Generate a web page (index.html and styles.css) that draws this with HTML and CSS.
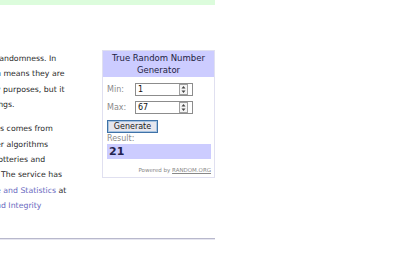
FILE: index.html
```html
<!DOCTYPE html>
<html lang="en">
  <head>
    <meta charset="UTF-8" />
    <meta name="viewport" content="width=device-width, initial-scale=1.0" />
    <title>RANDOM.ORG</title>
    <link rel="stylesheet" href="styles.css">
  </head>
  <body>
    <div class="topbar"></div>

    <div class="main">
      <div class="intro">
        <p class="para">
          <span class="line">randomness. In</span>
          <span class="line">h means they are</span>
          <span class="line">y purposes, but it</span>
          <span class="line">ings.</span>
        </p>
        <p class="para">
          <span class="line">ss comes from</span>
          <span class="line">er algorithms</span>
          <span class="line">lotteries and</span>
          <span class="line">. The service has</span>
          <span class="line"><a href="#">e and Statistics</a> at</span>
          <span class="line"><a href="#">nd Integrity</a></span>
        </p>
      </div>

      <div class="trng">
        <div class="trng-head">True Random Number<br />Generator</div>
        <form class="trng-body">
          <div class="field">
            <label>Min:</label>
            <div class="num">
              <span>1</span>
              <svg class="spin" width="9" height="11" viewBox="0 0 9 11">
                <rect x="0.5" y="0.5" width="8" height="10" fill="#f4f4f4" stroke="#a0a0a0" />
                <path d="M4.5 2 L6.5 4.5 L2.5 4.5 Z M4.5 9 L6.5 6.5 L2.5 6.5 Z" fill="#444" />
              </svg>
            </div>
          </div>
          <div class="field">
            <label>Max:</label>
            <div class="num">
              <span>67</span>
              <svg class="spin" width="9" height="11" viewBox="0 0 9 11">
                <rect x="0.5" y="0.5" width="8" height="10" fill="#f4f4f4" stroke="#a0a0a0" />
                <path d="M4.5 2 L6.5 4.5 L2.5 4.5 Z M4.5 9 L6.5 6.5 L2.5 6.5 Z" fill="#444" />
              </svg>
            </div>
          </div>
          <button type="button" class="gen">Generate</button>
          <div class="res-label">Result:</div>
          <div class="result">21</div>
          <div class="powered">Powered by <a href="#">RANDOM.ORG</a></div>
        </form>
      </div>
    </div>

    <div class="rule"></div>
  </body>
</html>
```

FILE: styles.css
```css
body {
  margin: 0;
  font-family: "DejaVu Sans", Verdana, sans-serif;
  color: #2a2a2a;
  background: white;
  overflow: hidden;
}
.topbar {
  width: 215px;
  height: 5px;
  background-color: #dcfcdc;
}
.main {
  width: 215px;
  display: flex;
  align-items: flex-start;
  margin-top: 45px;
}
.intro {
  margin-left: -4px;
  margin-top: 1px;
  width: 100px;
  font-size: 7.8px;
  line-height: 15.4px;
  white-space: nowrap;
}
.para {
  margin: 0 0 8.6px 0;
}
.line {
  display: block;
}
.intro a {
  color: #6a6ac0;
  text-decoration: none;
}
.trng {
  margin-left: auto;
  width: 111px;
  border: 1px solid #e0e0f0;
  font-size: 8px;
}
.trng-head {
  background-color: #ccccff;
  color: #23233f;
  text-align: center;
  font-size: 8.5px;
  line-height: 12px;
  padding: 1px 0 1px 0;
}
.trng-body {
  padding: 6px 3px 3px 4px;
  display: flex;
  flex-direction: column;
}
.field {
  display: flex;
  align-items: center;
  height: 13px;
  margin-bottom: 5px;
}
.field label {
  width: 28px;
  color: #8a8a8a;
}
.num {
  width: 58px;
  height: 13px;
  box-sizing: border-box;
  border: 1px solid #8c8c8c;
  display: flex;
  align-items: center;
  justify-content: space-between;
  padding: 0 4px 0 2px;
  color: #111;
}
.gen {
  align-self: flex-start;
  margin-top: 1px;
  width: 51px;
  height: 13px;
  padding: 0;
  font-family: "DejaVu Sans", Verdana, sans-serif;
  font-size: 8px;
  color: #1a1a1a;
  background-color: #e6e6ee;
  border: 1px solid #3f72a8;
  box-shadow: inset 0 0 0 1px #a8c4e0;
}
.res-label {
  color: #8a8a8a;
  margin-top: 1px;
  line-height: 9px;
}
.result {
  margin-top: 1px;
  background-color: #ccccff;
  color: #23234f;
  font-size: 11px;
  font-weight: bold;
  height: 15px;
  line-height: 15px;
  padding-left: 2px;
}
.powered {
  margin-top: 7px;
  text-align: right;
  font-size: 5.5px;
  color: #888;
  line-height: 8px;
}
.powered a {
  color: #888;
}
.rule {
  width: 215px;
  margin-top: 16px;
  border-top: 1px solid #b8b8cc;
  border-bottom: 1px solid #e6e6f0;
}
```
